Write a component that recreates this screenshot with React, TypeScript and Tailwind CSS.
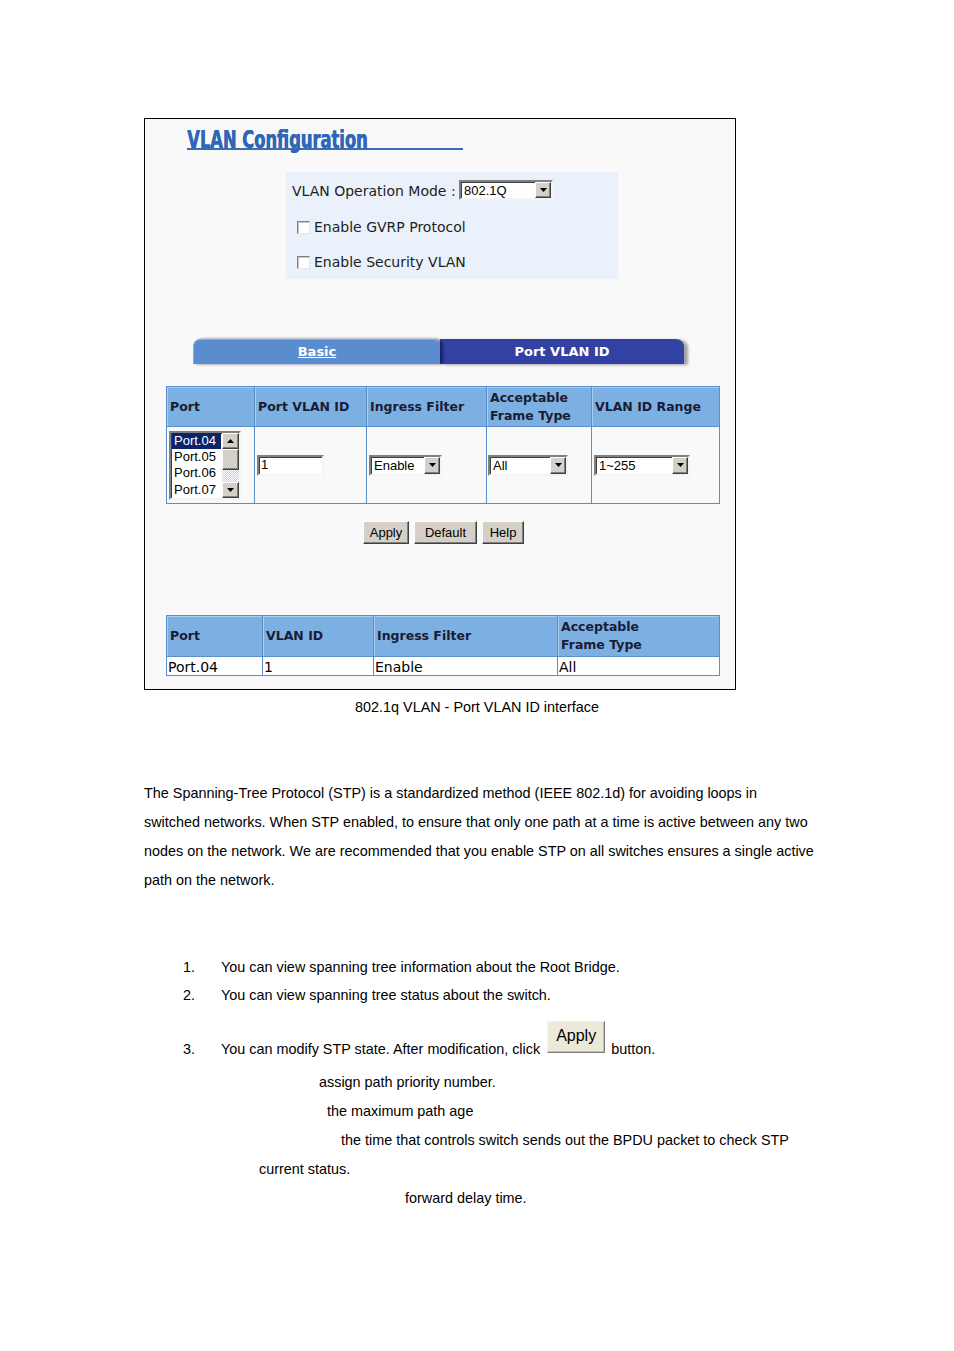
import React from 'react';

const verdana = "font-['DejaVu_Sans',Verdana,sans-serif]";
const arial = "font-['Liberation_Sans',Arial,sans-serif]";

const Tri = ({ up }: { up?: boolean }) => (
    <svg width="7" height="4" viewBox="0 0 7 4">
        <path d={up ? 'M3.5 0L7 4H0z' : 'M0 0h7L3.5 4z'} fill="#000" />
    </svg>
);

// raised win98-style button face
const raised =
    'bg-[#d4d0c8] border border-t-white border-l-white border-r-[#404040] border-b-[#404040] shadow-[inset_-1px_-1px_0_#808080]';
const sunken =
    'border-2 border-t-[#808080] border-l-[#808080] border-r-[#f4f4f4] border-b-[#f4f4f4] shadow-[inset_1px_1px_0_#404040]';

const Select = ({ value, className }: { value: string; className: string }) => (
    <div className={`flex bg-white ${sunken} ${className}`}>
        <span className={`flex flex-1 items-center pl-[3px] text-[13px] leading-none text-black ${arial}`}>{value}</span>
        <span className={`flex w-[16px] items-center justify-center ${raised}`}>
            <Tri />
        </span>
    </div>
);

const Checkbox = () => (
    <span className="block h-[13px] w-[13px] border border-t-[#808080] border-l-[#808080] border-r-[#e6e6e6] border-b-[#e6e6e6] bg-white shadow-[inset_1px_1px_0_#c8c8c8]" />
);

const Btn = ({ label, className }: { label: string; className: string }) => (
    <button className={`h-[23px] ${raised} text-[13px] leading-none text-black ${arial} ${className}`}>{label}</button>
);

const headCell = `flex items-center px-[3px] bg-[#7cb0e2] text-[12.5px] font-bold leading-[18px] text-[#1b1b33] shadow-[inset_1px_1px_0_#a8cdf0] ${verdana}`;

const PortList = () => (
    <div className={`flex h-[69px] w-[72px] bg-white ${sunken}`}>
        <div className={`w-[51px] text-[13px] leading-[16.4px] ${arial}`}>
            <div className="mx-[1px] bg-[#0a246a] pl-[2px] text-white">Port.04</div>
            <div className="pl-[3px]">Port.05</div>
            <div className="pl-[3px]">Port.06</div>
            <div className="pl-[3px]">Port.07</div>
        </div>
        <div className="flex w-[17px] flex-col">
            <span className={`flex h-[16px] items-center justify-center ${raised}`}>
                <Tri up />
            </span>
            <span className={`h-[21px] ${raised}`} />
            <span className="flex-1 bg-[repeating-conic-gradient(#d4d0c8_0%_25%,#ffffff_0%_50%)] bg-[length:2px_2px]" />
            <span className={`flex h-[16px] items-center justify-center ${raised}`}>
                <Tri />
            </span>
        </div>
    </div>
);

export default function App() {
    return (
        <div className={`h-[1351px] w-[954px] bg-white text-black ${arial}`}>
            <div className="pl-[144px] pt-[118px]">
                <div className="h-[572px] w-[592px] border border-black bg-[#f9f9f9]">
                    {/* title */}
                    <div className="ml-[42px] h-[31px] w-[276px] border-b-2 border-[#3a6cb5]">
                        <div className="origin-left scale-x-[0.68] whitespace-nowrap pt-[9px] font-['DejaVu_Sans',sans-serif] text-[24px] font-bold leading-[24px] text-[#2f66b8] [text-shadow:0.8px_0_0_#2f66b8]">
                            VLAN Configuration
                        </div>
                    </div>

                    {/* mode box */}
                    <div className={`ml-[141px] mt-[22px] h-[107px] w-[332px] bg-[#eaf1fa] pt-[8px] text-[14px] text-[#222] ${verdana}`}>
                        <div className="flex h-[20px] items-center pl-[6px]">
                            <span className="w-[167px] whitespace-nowrap pt-[3px]">VLAN Operation Mode :</span>
                            <Select value="802.1Q" className="h-[20px] w-[94px]" />
                        </div>
                        <div className="mt-[17px] flex h-[20px] items-center gap-[4px] pl-[11px]">
                            <Checkbox />
                            <span>Enable GVRP Protocol</span>
                        </div>
                        <div className="mt-[15px] flex h-[20px] items-center gap-[4px] pl-[11px]">
                            <Checkbox />
                            <span>Enable Security VLAN</span>
                        </div>
                    </div>

                    {/* tabs */}
                    <div className={`ml-[48px] mt-[60px] flex h-[25px] text-[13px] font-bold text-white ${verdana}`}>
                        <div className="relative z-10 flex w-[247px] items-center justify-center rounded-t-[7px] border-l border-t border-[#86aee0] bg-[#5a8dd0] shadow-[3px_0_3px_rgba(10,10,60,0.6)]">
                            <span className="underline">Basic</span>
                        </div>
                        <div className="flex w-[244px] items-center justify-center rounded-tr-[8px] bg-[#3342a2] shadow-[4px_1px_3px_rgba(0,0,0,0.35)]">
                            Port VLAN ID
                        </div>
                    </div>

                    {/* port vlan table */}
                    <div className="ml-[21px] mt-[22px] grid w-[554px] grid-cols-[87px_112px_120px_105px_128px] border border-[#5b8fcc]">
                        <div className={`${headCell} h-[40px] border-b border-[#5b8fcc]`}>Port</div>
                        <div className={`${headCell} border-b border-l border-[#5b8fcc]`}>Port VLAN ID</div>
                        <div className={`${headCell} border-b border-l border-[#5b8fcc]`}>Ingress Filter</div>
                        <div className={`${headCell} border-b border-l border-[#5b8fcc]`}>
                            Acceptable
                            <br />
                            Frame Type
                        </div>
                        <div className={`${headCell} border-b border-l border-[#5b8fcc]`}>VLAN ID Range</div>

                        <div className="flex h-[76px] items-center pl-[2px]">
                            <PortList />
                        </div>
                        <div className="flex items-center border-l border-[#5b8fcc] pl-[2px]">
                            <div className={`flex h-[21px] w-[67px] items-center bg-white pl-[2px] text-[13px] ${sunken}`}>1</div>
                        </div>
                        <div className="flex items-center border-l border-[#5b8fcc] pl-[2px]">
                            <Select value="Enable" className="h-[21px] w-[73px]" />
                        </div>
                        <div className="flex items-center border-l border-[#5b8fcc] pl-[1px]">
                            <Select value="All" className="h-[21px] w-[80px]" />
                        </div>
                        <div className="flex items-center border-l border-[#5b8fcc] pl-[2px]">
                            <Select value="1~255" className="h-[21px] w-[96px]" />
                        </div>
                    </div>

                    {/* buttons */}
                    <div className="ml-[218px] mt-[17px] flex gap-[5px]">
                        <Btn label="Apply" className="w-[46px]" />
                        <Btn label="Default" className="w-[63px]" />
                        <Btn label="Help" className="w-[42px]" />
                    </div>

                    {/* summary table */}
                    <div className={`ml-[21px] mt-[71px] grid w-[554px] grid-cols-[95px_111px_184px_162px] border border-[#5b8fcc] text-[14px] ${verdana}`}>
                        <div className={`${headCell} h-[41px] border-b border-[#5b8fcc]`}>Port</div>
                        <div className={`${headCell} border-b border-l border-[#5b8fcc]`}>VLAN ID</div>
                        <div className={`${headCell} border-b border-l border-[#5b8fcc]`}>Ingress Filter</div>
                        <div className={`${headCell} border-b border-l border-[#5b8fcc]`}>
                            Acceptable
                            <br />
                            Frame Type
                        </div>
                        <div className="flex h-[18px] items-center bg-white pl-[1px] pt-[1px] leading-none">Port.04</div>
                        <div className="flex items-center border-l border-[#5b8fcc] bg-white pl-[1px] pt-[1px] leading-none">1</div>
                        <div className="flex items-center border-l border-[#5b8fcc] bg-white pl-[1px] pt-[1px] leading-none">Enable</div>
                        <div className="flex items-center border-l border-[#5b8fcc] bg-white pl-[1px] pt-[1px] leading-none">All</div>
                    </div>
                </div>
            </div>

            <div className="mt-[7px] text-center text-[14.4px] leading-[20px]">802.1q VLAN - Port VLAN ID interface</div>

            <div className="mt-[62px] pl-[144px] text-[14.4px] leading-[29px]">
                <div>The Spanning-Tree Protocol (STP) is a standardized method (IEEE 802.1d) for avoiding loops in</div>
                <div>switched networks. When STP enabled, to ensure that only one path at a time is active between any two</div>
                <div>nodes on the network. We are recommended that you enable STP on all switches ensures a single active</div>
                <div>path on the network.</div>
            </div>

            <div className="mt-[58px] pl-[183px] text-[14.4px] leading-[28px]">
                <div className="flex">
                    <span className="w-[38px]">1.</span>
                    <span>You can view spanning tree information about the Root Bridge.</span>
                </div>
                <div className="flex">
                    <span className="w-[38px]">2.</span>
                    <span>You can view spanning tree status about the switch.</span>
                </div>
                <div className="mt-[12px] flex h-[38px]">
                    <span className="w-[38px] self-end leading-[20px]">3.</span>
                    <span className="self-end leading-[20px]">You can modify STP state. After modification, click</span>
                    <span className="ml-[7px] flex h-[32px] w-[58px] items-center justify-center border border-t-[#f4f4f4] border-l-[#f4f4f4] border-r-[#7f7f7f] border-b-[#7f7f7f] bg-[#ece9d8] pb-[2px] text-[16px] shadow-[inset_-1px_-1px_0_#bdbdbd]">
                        Apply
                    </span>
                    <span className="ml-[6px] self-end leading-[20px]">button.</span>
                </div>
            </div>

            <div className="mt-[9px] text-[14.4px] leading-[29px]">
                <div className="pl-[319px]">assign path priority number.</div>
                <div className="pl-[327px]">the maximum path age</div>
                <div className="pl-[341px]">the time that controls switch sends out the BPDU packet to check STP</div>
                <div className="pl-[259px]">current status.</div>
                <div className="pl-[405px]">forward delay time.</div>
            </div>
        </div>
    );
}
